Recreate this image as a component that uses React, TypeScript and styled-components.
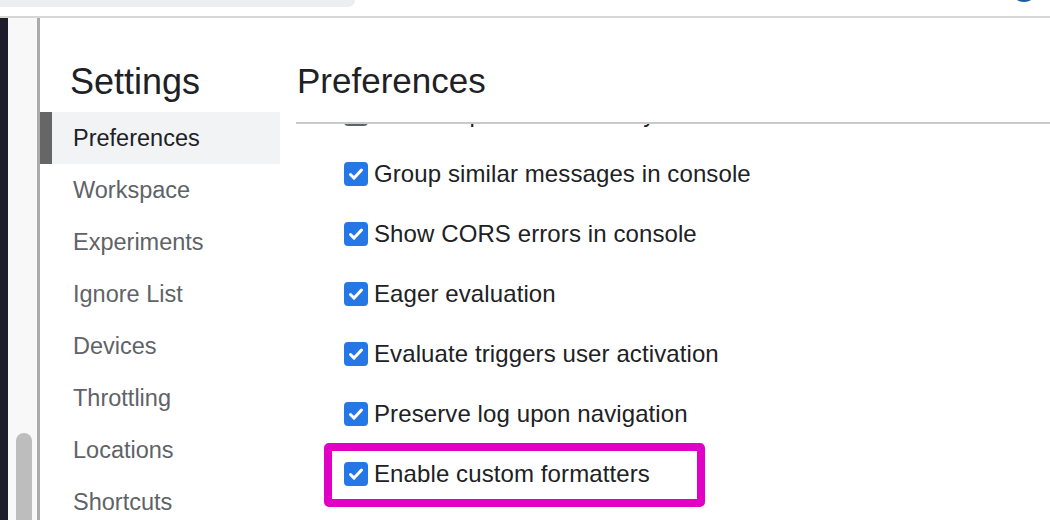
import React from "react";
import styled, { createGlobalStyle, css } from "styled-components";

const GlobalStyle = createGlobalStyle`
  html, body {
    margin: 0;
    padding: 0;
    width: 1050px;
    height: 520px;
    overflow: hidden;
    background: #ffffff;
    font-family: "Liberation Sans", Arial, Helvetica, sans-serif;
  }
  *, *::before, *::after { box-sizing: border-box; }
`;

const Page = styled.div`
  display: flex;
  flex-direction: column;
  width: 1050px;
  height: 520px;
`;

const TopStrip = styled.div`
  display: flex;
  justify-content: space-between;
  align-items: flex-start;
  height: 18px;
  background: #ffffff;
  border-bottom: 2px solid #d6d6d6;
  overflow: hidden;
  flex-shrink: 0;
`;

const TabShelf = styled.div`
  width: 355px;
  height: 7px;
  background: #edeef0;
  border-bottom-right-radius: 8px;
`;

const Avatar = styled.div`
  width: 28px;
  height: 28px;
  margin-top: -26px;
  margin-right: 12px;
  border-radius: 50%;
  background: #1b5ba6;
`;

const Body = styled.div`
  display: flex;
  flex: 1;
  min-height: 0;
  overflow: hidden;
`;

const DockStrip = styled.div`
  width: 8px;
  background: #1f1d2b;
  flex-shrink: 0;
`;

const Gutter = styled.div`
  width: 32px;
  flex-shrink: 0;
  background: #f8f8f8;
  border-right: 3px solid #ababab;
  display: flex;
  flex-direction: column;
  justify-content: flex-end;
  align-items: flex-start;
  padding-left: 8px;
`;

const ScrollThumb = styled.div`
  width: 16px;
  height: 87px;
  border-radius: 8px 8px 0 0;
  background: #bdbdbd;
`;

const Sidebar = styled.nav`
  width: 240px;
  flex-shrink: 0;
  display: flex;
  flex-direction: column;
  overflow: hidden;
`;

const SidebarTitle = styled.h1`
  margin: 0;
  padding: 43px 0 0 30px;
  height: 94px;
  flex-shrink: 0;
  font-size: 36px;
  line-height: 41px;
  font-weight: 400;
  color: #202124;
`;

const NavItem = styled.div<{ $selected?: boolean }>`
  height: 52px;
  flex-shrink: 0;
  display: flex;
  align-items: center;
  padding-left: 33px;
  font-size: 23.5px;
  color: #5f6368;
  ${(p) =>
    p.$selected &&
    css`
      background: #f1f3f4;
      box-shadow: inset 12px 0 0 #666666;
      color: #202124;
    `}
`;

const Main = styled.main`
  flex: 1;
  min-width: 0;
  display: flex;
  flex-direction: column;
  padding-left: 16px;
`;

const MainHeader = styled.div`
  padding: 43px 0 0 1px;
  height: 106px;
  border-bottom: 2px solid #c8cacd;
  flex-shrink: 0;
`;

const MainTitle = styled.h2`
  margin: 0;
  font-size: 35px;
  line-height: 40px;
  font-weight: 400;
  color: #202124;
`;

const ListViewport = styled.div`
  flex: 1;
  overflow: hidden;
`;

const List = styled.div`
  display: flex;
  flex-direction: column;
  margin-top: -40px;
`;

const Row = styled.label<{ $highlighted?: boolean }>`
  position: relative;
  height: 60px;
  flex-shrink: 0;
  display: flex;
  align-items: center;
  gap: 6px;
  padding-left: 48px;
  font-size: 24px;
  letter-spacing: 0.1px;
  color: #202124;
  ${(p) =>
    p.$highlighted &&
    css`
      &::after {
        content: "";
        position: absolute;
        left: 28px;
        top: -1px;
        width: 381px;
        height: 64px;
        border: 8px solid #e100c6;
        border-radius: 5px;
        pointer-events: none;
      }
    `}
`;

const Box = styled.span<{ $checked: boolean }>`
  width: 24px;
  height: 24px;
  flex-shrink: 0;
  border-radius: 4px;
  display: flex;
  align-items: center;
  justify-content: center;
  ${(p) =>
    p.$checked
      ? css`
          background: #2677e6;
        `
      : css`
          background: #ffffff;
          border: 2px solid #5f6368;
        `}
`;

const Check = () => (
  <svg width="18" height="18" viewBox="0 0 18 18" fill="none">
    <path
      d="M3.5 9.5l3.6 3.6L14.5 5"
      stroke="#ffffff"
      strokeWidth="3"
      strokeLinecap="round"
      strokeLinejoin="round"
    />
  </svg>
);

const navItems = [
  "Preferences",
  "Workspace",
  "Experiments",
  "Ignore List",
  "Devices",
  "Throttling",
  "Locations",
  "Shortcuts",
];

const prefs: { label: string; checked: boolean; highlighted?: boolean }[] = [
  { label: "Autocomplete from history", checked: false },
  { label: "Group similar messages in console", checked: true },
  { label: "Show CORS errors in console", checked: true },
  { label: "Eager evaluation", checked: true },
  { label: "Evaluate triggers user activation", checked: true },
  { label: "Preserve log upon navigation", checked: true },
  { label: "Enable custom formatters", checked: true, highlighted: true },
];

export default function App() {
  return (
    <>
      <GlobalStyle />
      <Page>
        <TopStrip>
          <TabShelf />
          <Avatar />
        </TopStrip>
        <Body>
          <DockStrip />
          <Gutter>
            <ScrollThumb />
          </Gutter>
          <Sidebar>
            <SidebarTitle>Settings</SidebarTitle>
            {navItems.map((item, i) => (
              <NavItem key={item} $selected={i === 0}>
                {item}
              </NavItem>
            ))}
          </Sidebar>
          <Main>
            <MainHeader>
              <MainTitle>Preferences</MainTitle>
            </MainHeader>
            <ListViewport>
              <List>
                {prefs.map((p) => (
                  <Row key={p.label} $highlighted={p.highlighted}>
                    <Box $checked={p.checked}>{p.checked && <Check />}</Box>
                    {p.label}
                  </Row>
                ))}
              </List>
            </ListViewport>
          </Main>
        </Body>
      </Page>
    </>
  );
}
